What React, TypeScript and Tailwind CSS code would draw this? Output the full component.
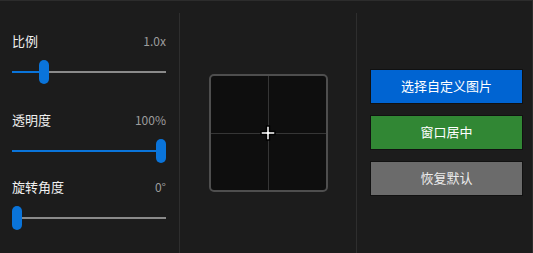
const font = { fontFamily: '"Noto Sans CJK SC", "Noto Sans", sans-serif' };

type SliderProps = { label: string; value: string; pct: number };

function Slider({ label, value, pct }: SliderProps) {
  return (
    <div className="flex flex-col">
      <div className="flex h-5 items-center justify-between">
        <span className="text-[13px] text-[#f0f0f0]">{label}</span>
        <span className="text-[12px] text-[#9d9d9d]">{value}</span>
      </div>
      <div className="relative mt-[9px] h-6">
        <div className="absolute left-0 right-0 top-[11px] h-[2px] bg-[#8a8a8a]" />
        <div
          className="absolute left-0 top-[11px] h-[2px] bg-[#0a74da]"
          style={{ width: `${pct}%` }}
        />
        <div
          className="absolute top-0 h-6 w-[10px] rounded-full bg-[#0a74da]"
          style={{ left: `calc(${pct}% - ${pct / 10}px)` }}
        />
      </div>
    </div>
  );
}

function Cursor() {
  return (
    <svg
      width="17"
      height="17"
      viewBox="0 0 17 17"
      className="absolute left-1/2 top-1/2 -translate-x-1/2 -translate-y-1/2"
    >
      <path
        d="M7 1.5h3v5.5h5.5v3H10v5.5H7V10H1.5V7H7z"
        fill="#fff"
        stroke="#000"
        strokeWidth="1.5"
        strokeLinejoin="round"
      />
    </svg>
  );
}

export default function App() {
  return (
    <div
      className="flex h-[253px] w-[533px] border-t border-r border-[#2c2c2c] bg-[#1c1c1c]"
      style={font}
    >
      <div className="mt-3 flex w-[180px] flex-col border-r border-[#2e2e2e] pl-3 pr-[13px] pt-[18px]">
        <Slider label="比例" value="1.0x" pct={18.75} />
        <div className="mt-[26px]">
          <Slider label="透明度" value="100%" pct={100} />
        </div>
        <div className="mt-[14px]">
          <Slider label="旋转角度" value="0°" pct={0} />
        </div>
      </div>

      <div className="mt-3 flex w-[177px] items-center justify-center border-r border-[#2e2e2e]">
        <div className="relative h-[118px] w-[119px] rounded-[5px] border-2 border-[#4e4e4e] bg-[#0e0e0e]">
          <div className="absolute bottom-0 left-1/2 top-0 w-px bg-[#363636]" />
          <div className="absolute left-0 right-0 top-1/2 h-px bg-[#363636]" />
          <Cursor />
        </div>
      </div>

      <div className="mt-3 flex flex-1 flex-col justify-center gap-[11px] pl-[13px] pr-[9px] pb-[2px]">
        <button className="h-[35px] border border-[#111] bg-[#0064d2] text-[13px] text-white">
          选择自定义图片
        </button>
        <button className="h-[35px] border border-[#111] bg-[#318734] text-[13px] text-white">
          窗口居中
        </button>
        <button className="h-[35px] border border-[#111] bg-[#6b6b6b] text-[13px] text-[#ececec]">
          恢复默认
        </button>
      </div>
    </div>
  );
}
